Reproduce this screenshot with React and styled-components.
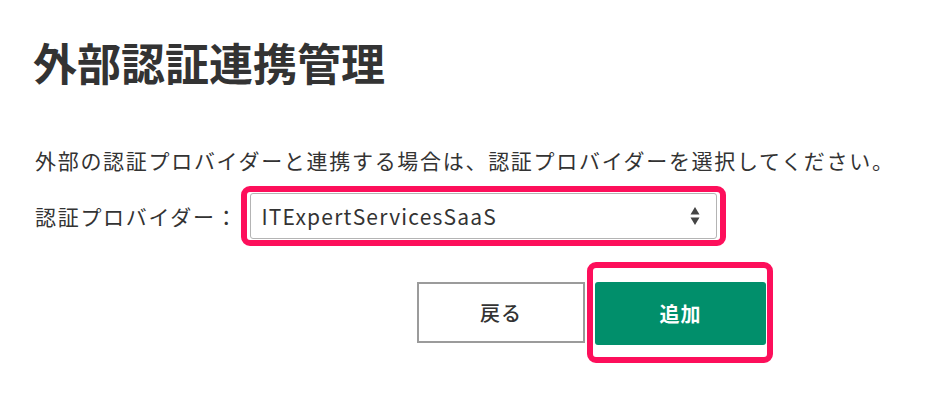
import React from "react";
import styled, { createGlobalStyle } from "styled-components";

const Global = createGlobalStyle`
  html, body { margin: 0; padding: 0; background: #fff; }
  body {
    font-family: "Noto Sans CJK JP", "Noto Sans", sans-serif;
    color: #333;
  }
`;

const Page = styled.div`
  padding: 36px 35px 0;
`;

const Title = styled.h1`
  margin: 0 0 0 -2px;
  font-size: 44px;
  line-height: 52px;
  font-weight: 700;
  color: #333;
`;

const Description = styled.p`
  margin: 56px 0 0;
  font-size: 21px;
  line-height: 32px;
  letter-spacing: 1.7px;
  color: #333;
`;

const FieldRow = styled.div`
  margin-top: 10px;
  display: flex;
  align-items: center;
  gap: 3px;
`;

const Label = styled.span`
  font-size: 21px;
  letter-spacing: 1.7px;
  line-height: 32px;
  white-space: nowrap;
`;

const Highlight = styled.div`
  border: 6px solid #fd0f5b;
  border-radius: 9px;
  padding: ${(p) => p.$pad};
  display: flex;
`;

const SelectBox = styled.div`
  width: 467px;
  height: 46px;
  box-sizing: border-box;
  border: 1px solid #b4b4b4;
  border-radius: 3px;
  display: flex;
  align-items: center;
  justify-content: space-between;
  padding: 0 16px 0 10px;
  font-size: 21px;
  letter-spacing: 1.2px;
  color: #333;
`;

const Arrows = styled.svg`
  width: 10px;
  height: 22px;
  display: block;
`;

const ButtonRow = styled.div`
  margin-top: 16px;
  padding-left: 382px;
  display: flex;
  align-items: center;
  gap: 2px;
`;

const Button = styled.button`
  box-sizing: border-box;
  width: ${(p) => p.$w}px;
  height: ${(p) => p.$h}px;
  font-family: inherit;
  font-size: 20px;
  letter-spacing: 1px;
  cursor: pointer;
  border-radius: ${(p) => (p.$primary ? "3px" : "0")};
  border: ${(p) => (p.$primary ? "none" : "2px solid #9b9b9b")};
  background: ${(p) => (p.$primary ? "#018f6b" : "#fff")};
  color: ${(p) => (p.$primary ? "#fff" : "#333")};
  font-weight: ${(p) => (p.$primary ? 700 : 500)};
  padding: 0;
`;

export default function App() {
  return (
    <>
      <Global />
      <Page>
        <Title>外部認証連携管理</Title>
        <Description>
          外部の認証プロバイダーと連携する場合は、認証プロバイダーを選択してください。
        </Description>
        <FieldRow>
          <Label>認証プロバイダー：</Label>
          <Highlight $pad="1px 3px">
            <SelectBox>
              <span>ITExpertServicesSaaS</span>
              <Arrows viewBox="0 0 10 22">
                <path d="M5 2 L9.5 9.5 L0.5 9.5 Z" fill="#444" />
                <path d="M0.5 12.5 L9.5 12.5 L5 20 Z" fill="#444" />
              </Arrows>
            </SelectBox>
          </Highlight>
        </FieldRow>
        <ButtonRow>
          <Button $w={168} $h={61}>戻る</Button>
          <Highlight $pad="14px 1px 12px 2px">
            <Button $primary $w={171} $h={63}>追加</Button>
          </Highlight>
        </ButtonRow>
      </Page>
    </>
  );
}
